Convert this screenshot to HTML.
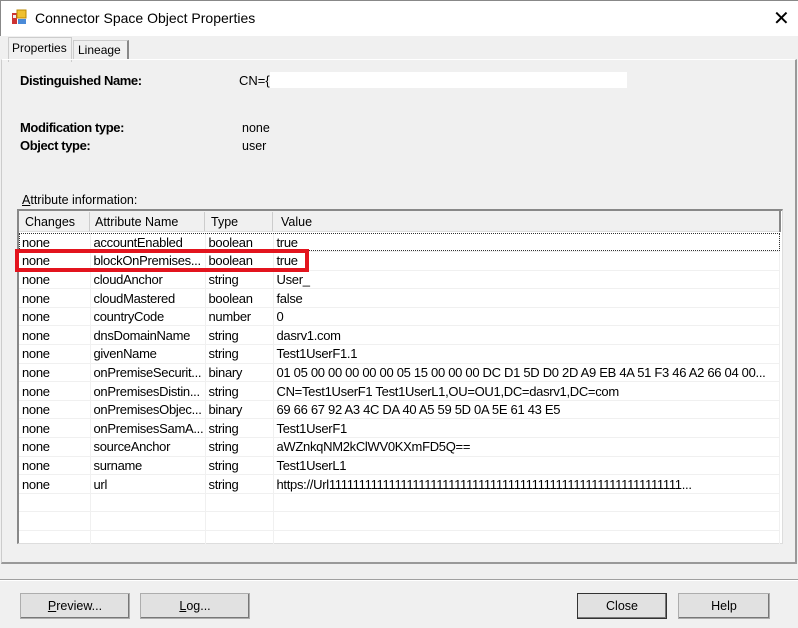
<!DOCTYPE html>
<html><head><style>
*{margin:0;padding:0;box-sizing:border-box}
body{width:798px;height:628px;background:#f0f0f0;font-family:"Liberation Sans",sans-serif;font-size:12px;color:#000;position:relative;overflow:hidden}
.a{position:absolute}
.title{left:0;top:0;width:798px;height:36px;background:#fff;border-left:1px solid #888;border-top:1px solid #888}
.lbl{font-weight:bold;font-size:13px;letter-spacing:-0.4px}
table{border-collapse:collapse;table-layout:fixed}
td{height:18.6px;padding:0 3px;border-right:1px solid #f0f0f0;border-bottom:1px solid #f0f0f0;white-space:nowrap;overflow:hidden;font-size:13px;letter-spacing:-0.3px}
.btn{position:absolute;top:593px;height:26px;background:#e1e1e1;border:1px solid #adadad;box-shadow:inset -1px -1px 0 #777;text-align:center;line-height:24px;font-size:12.5px}
</style></head><body>
<div class="a title"></div>
<svg class="a" style="left:11px;top:9px" width="18" height="18"><rect x="1" y="4" width="5" height="11" fill="#c33"/><rect x="2" y="6" width="3" height="3" fill="#eee"/><rect x="6" y="1" width="9" height="8" fill="#f0c030" stroke="#b80" stroke-width="1"/><rect x="7" y="10" width="8" height="5" fill="#4a8ad8"/></svg>
<div class="a" style="left:35px;top:10px;font-size:14px">Connector Space Object Properties</div>
<div class="a" style="left:773px;top:6px;font-size:20px;font-weight:200">✕</div>
<div class="a" style="left:8px;top:37px;width:64px;height:25px;background:#f0f0f0;border:1px solid #ccc;border-bottom:none"></div>
<div class="a" style="left:12px;top:41px">Properties</div>
<div class="a" style="left:73px;top:40px;width:56px;height:20px;border:1px solid #ccc;border-right:2px solid #888;background:#f0f0f0"></div>
<div class="a" style="left:78px;top:43px">Lineage</div>
<div class="a" style="left:1px;top:59px;width:796px;height:505px;border:1px solid #ccc;border-right:2px solid #999;border-bottom:2px solid #999;border-top:1px solid #fff"></div>
<div class="a lbl" style="left:20px;top:73px">Distinguished Name:</div>
<div class="a" style="left:239px;top:73px;font-size:13px">CN={</div>
<div class="a" style="left:270px;top:72px;width:357px;height:16px;background:#fff"></div>
<div class="a lbl" style="left:20px;top:120px">Modification type:</div>
<div class="a" style="left:242px;top:121px;font-size:12.5px">none</div>
<div class="a lbl" style="left:20px;top:138px">Object type:</div>
<div class="a" style="left:242px;top:139px;font-size:12.5px">user</div>
<div class="a" style="left:22px;top:193px;font-size:12.5px"><u>A</u>ttribute information:</div>
<div class="a" style="left:17px;top:209px;width:766px;height:335px;background:#fff;border:2px solid #888;border-right:1px solid #ddd;border-bottom:1px solid #ddd"></div>
<div class="a" style="left:19px;top:211px;width:761px;height:21px;background:#f0f0f0;border-bottom:1px solid #ddd"></div>
<div class="a" style="left:89px;top:212px;width:1px;height:19px;background:#ccc"></div>
<div class="a" style="left:204px;top:212px;width:1px;height:19px;background:#ccc"></div>
<div class="a" style="left:272px;top:212px;width:1px;height:19px;background:#ccc"></div>
<div class="a" style="left:779px;top:211px;width:2px;height:21px;background:#888"></div>
<div class="a" style="left:25px;top:215px;font-size:12.5px">Changes</div>
<div class="a" style="left:95px;top:215px;font-size:12.5px">Attribute Name</div>
<div class="a" style="left:211px;top:215px;font-size:12.5px">Type</div>
<div class="a" style="left:281px;top:215px;font-size:12.5px">Value</div>
<table class="a" style="left:19px;top:233px;width:761px">
<colgroup><col style="width:71px"><col style="width:115px"><col style="width:68px"><col></colgroup>
<tr><td>none</td><td>accountEnabled</td><td>boolean</td><td>true</td></tr>
<tr><td>none</td><td>blockOnPremises...</td><td>boolean</td><td>true</td></tr>
<tr><td>none</td><td>cloudAnchor</td><td>string</td><td>User_</td></tr>
<tr><td>none</td><td>cloudMastered</td><td>boolean</td><td>false</td></tr>
<tr><td>none</td><td>countryCode</td><td>number</td><td>0</td></tr>
<tr><td>none</td><td>dnsDomainName</td><td>string</td><td>dasrv1.com</td></tr>
<tr><td>none</td><td>givenName</td><td>string</td><td>Test1UserF1.1</td></tr>
<tr><td>none</td><td>onPremiseSecurit...</td><td>binary</td><td>01 05 00 00 00 00 00 05 15 00 00 00 DC D1 5D D0 2D A9 EB 4A 51 F3 46 A2 66 04 00...</td></tr>
<tr><td>none</td><td>onPremisesDistin...</td><td>string</td><td>CN=Test1UserF1 Test1UserL1,OU=OU1,DC=dasrv1,DC=com</td></tr>
<tr><td>none</td><td>onPremisesObjec...</td><td>binary</td><td>69 66 67 92 A3 4C DA 40 A5 59 5D 0A 5E 61 43 E5</td></tr>
<tr><td>none</td><td>onPremisesSamA...</td><td>string</td><td>Test1UserF1</td></tr>
<tr><td>none</td><td>sourceAnchor</td><td>string</td><td>aWZnkqNM2kClWV0KXmFD5Q==</td></tr>
<tr><td>none</td><td>surname</td><td>string</td><td>Test1UserL1</td></tr>
<tr><td>none</td><td>url</td><td>string</td><td>https://Url11111111111111111111111111111111111111111111111111111111111...</td></tr>
<tr><td></td><td></td><td></td><td></td></tr>
<tr><td></td><td></td><td></td><td></td></tr>
<tr><td></td><td></td><td></td><td></td></tr>
</table>
<div class="a" style="left:19px;top:233px;width:761px;height:18px;border:1px dotted #333"></div>
<div class="a" style="left:15px;top:249px;width:294px;height:23px;border:4px solid #e3141e"></div>
<div class="a" style="left:0;top:579px;width:798px;height:1px;background:#a0a0a0"></div>
<div class="a" style="left:0;top:580px;width:798px;height:1px;background:#fff"></div>
<div class="btn" style="left:20px;width:110px"><u>P</u>review...</div>
<div class="btn" style="left:140px;width:110px"><u>L</u>og...</div>
<div class="btn" style="left:577px;width:90px;border:1px solid #333">Close</div>
<div class="btn" style="left:678px;width:92px">Help</div>
</body></html>
